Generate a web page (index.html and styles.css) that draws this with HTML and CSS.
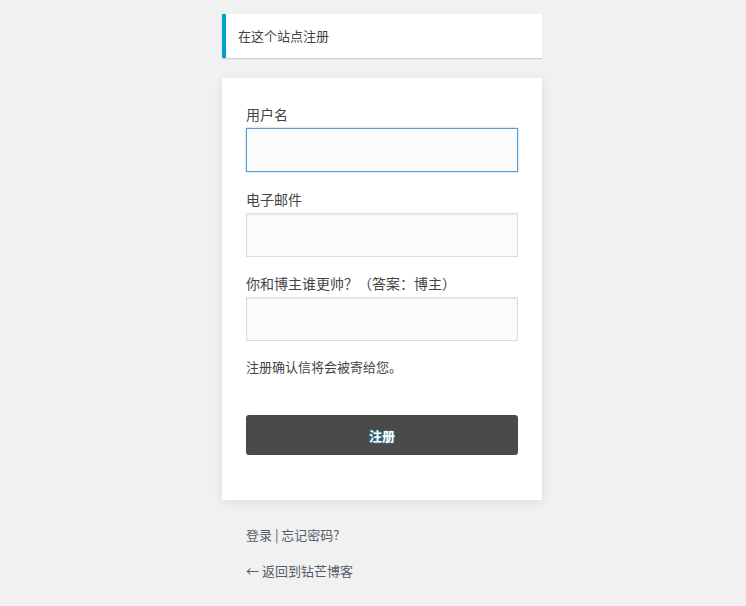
FILE: index.html
```html
<!DOCTYPE html>
<html lang="zh-CN">
<head>
<meta charset="utf-8">
<title>注册</title>
<link rel="stylesheet" href="styles.css">
</head>
<body class="page">
<div class="login">
  <p class="message">在这个站点注册</p>
  <form class="form">
    <label class="field">
      <span class="label">用户名</span>
      <input class="input input-focus" type="text">
    </label>
    <label class="field">
      <span class="label">电子邮件</span>
      <input class="input" type="text">
    </label>
    <label class="field">
      <span class="label">你和博主谁更帅？（答案：博主）</span>
      <input class="input" type="text">
    </label>
    <p class="note">注册确认信将会被寄给您。</p>
    <button class="button" type="button">注册</button>
  </form>
  <p class="nav"><a href="#">登录</a> | <a href="#">忘记密码?</a></p>
  <p class="back"><a href="#">← 返回到钻芒博客</a></p>
</div>
</body>
</html>
```
FILE: styles.css
```css
html, body {
  margin: 0;
  padding: 0;
  background: #f1f1f1;
}
.page {
  font-family: "Noto Sans CJK SC", "Liberation Sans", sans-serif;
  font-size: 13px;
  color: #444;
}
.login {
  width: 320px;
  margin: 0 auto;
  padding-top: 14px;
  position: relative;
  left: 9px;
}
.message {
  margin: 0 0 20px;
  background: #fff;
  border-left: 4px solid #00a0d2;
  box-shadow: 0 1px 1px rgba(0,0,0,.15);
  padding: 0 12px;
  height: 44px;
  line-height: 44px;
  font-size: 13px;
  color: #444;
}
.form {
  background: #fff;
  padding: 26px 24px 45px;
  box-shadow: 0 2px 10px rgba(0,0,0,.09);
  display: flex;
  flex-direction: column;
}
.field {
  display: flex;
  flex-direction: column;
}
.label {
  font-size: 14px;
  line-height: 21px;
  color: #444;
  margin-bottom: 3px;
}
.input {
  box-sizing: border-box;
  width: 100%;
  height: 44px;
  margin: 0 0 16.5px;
  padding: 3px;
  font-size: 24px;
  background: #fbfbfb;
  border: 1px solid #ddd;
  box-shadow: inset 0 1px 2px rgba(0,0,0,.07);
  outline: none;
}
.input-focus {
  border-color: #5b9dd9;
  box-shadow: 0 0 2px rgba(30,140,190,.5);
}
.note {
  margin: -0.5px 0 0;
  font-size: 13px;
  line-height: 20px;
  color: #444;
}
.button {
  margin-top: 38px;
  height: 40px;
  border: none;
  border-radius: 3px;
  background: #4a4a4a;
  color: #fff;
  font-family: inherit;
  font-size: 13px;
  font-weight: bold;
  text-shadow: 0 0 2px #1ab2e0;
  cursor: pointer;
}
.nav, .back {
  margin: 0;
  padding: 0 24px;
  font-size: 13px;
  line-height: 20px;
  color: #555d66;
}
.nav {
  margin-top: 25px;
}
.back {
  margin-top: 16px;
}
.nav a, .back a {
  color: #555d66;
  text-decoration: none;
}
```
